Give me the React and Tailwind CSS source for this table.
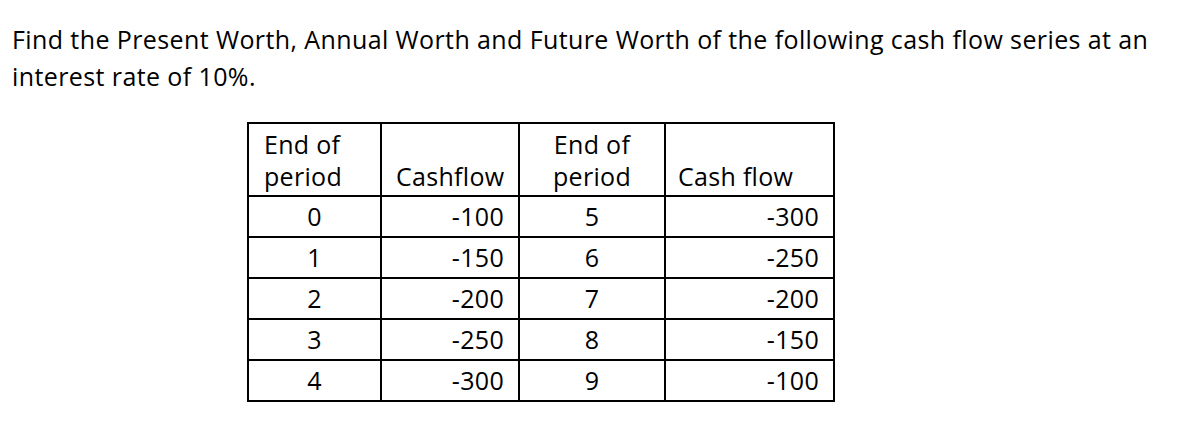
import React from 'react'

const rows = [
    ['0', '-100', '5', '-300'],
    ['1', '-150', '6', '-250'],
    ['2', '-200', '7', '-200'],
    ['3', '-250', '8', '-150'],
    ['4', '-300', '9', '-100'],
]

export default function App() {
    return (
        <div className="w-[1190px] h-[426px] bg-white text-black pt-[21px] pl-[12px]" style={{ fontFamily: '"Open Sans", "Noto Sans", sans-serif' }}>
            {/* Question */}
            <p className="text-[25px] leading-[37px] tracking-[0.4px]">
                <span className="block whitespace-nowrap">Find the Present Worth, Annual Worth and Future Worth of the following cash flow series at an</span>
                <span className="block whitespace-nowrap">interest rate of 10%.</span>
            </p>

            {/* Cash flow table */}
            <table className="ml-[235px] mt-[27px] border-collapse border-2 border-black text-[25px] tracking-[0.3px]">
                <thead>
                    <tr className="h-[73px]">
                        <th className="w-[133px] border-2 border-black font-normal text-left align-bottom pl-[15px] pb-[3px] leading-[32px]">End of<br />period</th>
                        <th className="w-[138px] border-2 border-black font-normal text-left align-bottom pl-[14px] pb-[3px] leading-[32px]">Cashflow</th>
                        <th className="w-[146px] border-2 border-black font-normal text-center align-bottom pb-[3px] leading-[32px]">End of<br />period</th>
                        <th className="w-[169px] border-2 border-black font-normal text-left align-bottom pl-[12px] pb-[3px] leading-[32px]">Cash flow</th>
                    </tr>
                </thead>
                <tbody>
                    {rows.map((r, i) => (
                        <tr key={i} className="h-[41px]">
                            <td className="border-2 border-black text-center">{r[0]}</td>
                            <td className="border-2 border-black text-right pr-[14px]">{r[1]}</td>
                            <td className="border-2 border-black text-center">{r[2]}</td>
                            <td className="border-2 border-black text-right pr-[14px]">{r[3]}</td>
                        </tr>
                    ))}
                </tbody>
            </table>
        </div>
    )
}
